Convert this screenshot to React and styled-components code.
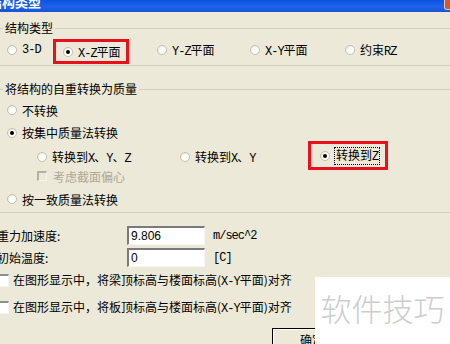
import React from 'react';
import styled, { createGlobalStyle } from 'styled-components';

const CJK = `"Noto Sans CJK SC", "Liberation Sans", sans-serif`;
const MONO = `"Liberation Mono", "Noto Sans CJK SC", monospace`;

const Global = createGlobalStyle`
  html, body { margin: 0; padding: 0; background: #ECE9D8; }
  body { width: 450px; height: 344px; overflow: hidden; }
`;

const Window = styled.div`
  width: 450px;
  height: 344px;
  overflow: hidden;
  position: relative;
  background: #ECE9D8;
  font-family: ${CJK};
  font-size: 12px;
  color: #000;
  display: flex;
  flex-direction: column;
`;

const TitleBar = styled.div`
  height: 12px;
  flex: none;
  display: flex;
  align-items: flex-end;
  background: linear-gradient(#0b52e0, #1f63ea 55%, #1752d6);
  overflow: hidden;
`;

const Title = styled.span`
  flex: none;
  font-weight: bold;
  color: #fff;
  font-size: 13px;
  line-height: 13px;
  margin-left: -11px;
  margin-bottom: 4px;
  white-space: nowrap;
`;

const CloseButton = styled.span`
  align-self: flex-start;
  margin-left: auto;
  margin-right: -15px;
  width: 21px;
  height: 10px;
  box-sizing: border-box;
  border: 1px solid #f3c3a8;
  border-top: none;
  border-radius: 0 0 3px 3px;
  background: #d9542a;
`;

const Client = styled.div`
  margin-left: -3px;
  width: 480px;
  padding-top: 8px;
  display: flex;
  flex-direction: column;
`;

const Group = styled.fieldset`
  margin: ${p => p.$mt || 0}px 0 0 0;
  padding: ${p => p.$pt || 0}px 0 ${p => p.$pb}px 9px;
  border: 1px solid #d0cebf;
  border-radius: 3px;
  min-width: 0;
`;

const Legend = styled.legend`
  padding: 0 2px;
  margin-left: -4px;
  line-height: 16px;
  font-size: 12px;
`;

const TypeRow = styled.div`
  display: grid;
  grid-template-columns: 46px 104px 93px 95px auto;
  align-items: center;
  height: 22px;
`;

const Row = styled.div`
  display: ${p => (p.$grid ? 'grid' : 'flex')};
  grid-template-columns: 143px 128px auto;
  align-items: center;
  height: ${p => p.$h}px;
  padding-left: ${p => p.$indent || 0}px;
`;

const Option = styled.span`
  display: inline-flex;
  align-items: center;
  gap: 5px;
  white-space: nowrap;
  color: ${p => (p.$disabled ? '#aca899' : '#000')};
`;

const Radio = styled.span`
  width: 10px;
  height: 10px;
  flex: none;
  box-sizing: border-box;
  border-radius: 50%;
  border: 1px solid #c3c0b1;
  background: radial-gradient(circle at 65% 65%, #ffffff 45%, #dedbcd 100%);
  display: grid;
  place-items: center;
  &::after {
    content: '';
    width: 4px;
    height: 4px;
    border-radius: 50%;
    background: #000;
    display: ${p => (p.$on ? 'block' : 'none')};
  }
`;

const DisabledBox = styled.span`
  width: 10px;
  height: 10px;
  flex: none;
  box-sizing: border-box;
  border-style: solid;
  border-width: 2px 1px 1px 2px;
  border-color: #b4b1a2 #f4f3ee #f4f3ee #b4b1a2;
  margin-right: 1px;
`;

const Latin = styled.span`
  font-family: ${MONO};
  font-size: 12px;
  letter-spacing: -1px;
`;

const Highlight = styled.div`
  justify-self: start;
  box-sizing: border-box;
  border: 3px solid #e8101a;
  height: ${p => p.$h}px;
  width: ${p => p.$w}px;
  padding-left: ${p => p.$pl}px;
  margin-top: ${p => p.$mt || 0}px;
  display: flex;
  align-items: center;
`;

const Focus = styled.span`
  outline: 1px dotted #000;
  outline-offset: 0;
  padding: 0 1px;
  line-height: 14px;
`;

const Fields = styled.div`
  display: flex;
  flex-direction: column;
  gap: 3px;
  margin-top: 13px;
`;

const FieldRow = styled.div`
  display: grid;
  grid-template-columns: 122px 78px auto;
  column-gap: 8px;
  align-items: center;
  height: 19px;
`;

const Input = styled.input`
  box-sizing: border-box;
  width: 78px;
  height: 19px;
  margin: 0;
  padding: 0 2px;
  font-family: "Liberation Sans", sans-serif;
  font-size: 12px;
  color: #000;
  background: #fff;
  border-style: solid;
  border-width: 2px 1px 1px 2px;
  border-color: #7a7a7a #f6f6f6 #f6f6f6 #7a7a7a;
  outline: none;
`;

const Checks = styled.div`
  display: flex;
  flex-direction: column;
  gap: 7px;
  margin-top: 3px;
`;

const CheckRow = styled.div`
  display: flex;
  align-items: center;
  gap: 4px;
  height: 20px;
  margin-left: -1px;
  white-space: nowrap;
`;

const CheckBox = styled.span`
  width: 13px;
  height: 13px;
  flex: none;
  box-sizing: border-box;
  background: #fff;
  border-style: solid;
  border-width: 2px 1px 1px 2px;
  border-color: #8f8f8f #f4f4f4 #f4f4f4 #8f8f8f;
`;

const Footer = styled.div`
  display: flex;
  gap: 8px;
  margin-top: 11px;
  padding-left: 275px;
`;

const Button = styled.button`
  width: 80px;
  height: 23px;
  margin: 0;
  padding: 0;
  font-family: ${CJK};
  font-size: 12px;
  color: #000;
  background: #ECE9D8;
  border: 1px solid #000;
  box-shadow: inset 1px 1px #fff, inset -1px -1px #404040, inset -2px -2px #808080;
`;

const Watermark = styled.div`
  position: absolute;
  left: 315px;
  top: 277px;
  right: 0;
  bottom: 0;
  background: #fff;
  display: flex;
  align-items: center;
  justify-content: center;
  padding-bottom: 6px;
  box-sizing: border-box;
  color: #cdcdcd;
  font-family: ${CJK};
  font-weight: 300;
  font-size: 31px;
  white-space: nowrap;
`;

export default function App() {
  return (
    <Window>
      <Global />
      <TitleBar>
        <Title>结构类型</Title>
        <CloseButton />
      </TitleBar>
      <Client>
        <Group $pb={7}>
          <Legend>结构类型</Legend>
          <TypeRow>
            <Option><Radio /><Latin>3-D</Latin></Option>
            <Highlight $h={25} $w={76} $pl={7} $mt={3}>
              <Option><Radio $on /><span><Latin>X-Z</Latin>平面</span></Option>
            </Highlight>
            <Option><Radio /><span><Latin>Y-Z</Latin>平面</span></Option>
            <Option><Radio /><span><Latin>X-Y</Latin>平面</span></Option>
            <Option><Radio /><span>约束<Latin>RZ</Latin></span></Option>
          </TypeRow>
        </Group>
        <Group $mt={15} $pt={2} $pb={2}>
          <Legend>将结构的自重转换为质量</Legend>
          <Row $h={22}>
            <Option><Radio />不转换</Option>
          </Row>
          <Row $h={23}>
            <Option><Radio $on />按集中质量法转换</Option>
          </Row>
          <Row $h={20} $indent={30} $grid>
            <Option><Radio /><span>转换到<Latin>X</Latin>、<Latin>Y</Latin>、<Latin>Z</Latin></span></Option>
            <Option><Radio /><span>转换到<Latin>X</Latin>、<Latin>Y</Latin></span></Option>
            <Highlight $h={29} $w={80} $pl={9} $mt={-3}>
              <Option><Radio $on /><Focus>转换到<Latin>Z</Latin></Focus></Option>
            </Highlight>
          </Row>
          <Row $h={24} $indent={30}>
            <Option $disabled><DisabledBox />考虑截面偏心</Option>
          </Row>
          <Row $h={22}>
            <Option><Radio />按一致质量法转换</Option>
          </Row>
        </Group>
        <Fields>
          <FieldRow>
            <span>重力加速度:</span>
            <Input readOnly value="9.806" />
            <Latin>m/sec^2</Latin>
          </FieldRow>
          <FieldRow>
            <span>初始温度:</span>
            <Input readOnly value="0" />
            <Latin>[C]</Latin>
          </FieldRow>
        </Fields>
        <Checks>
          <CheckRow>
            <CheckBox />
            <span>在图形显示中，将梁顶标高与楼面标高(<Latin>X-Y</Latin>平面)对齐</span>
          </CheckRow>
          <CheckRow>
            <CheckBox />
            <span>在图形显示中，将板顶标高与楼面标高(<Latin>X-Y</Latin>平面)对齐</span>
          </CheckRow>
        </Checks>
        <Footer>
          <Button>确定</Button>
          <Button>取消</Button>
        </Footer>
      </Client>
      <Watermark>软件技巧</Watermark>
    </Window>
  );
}
